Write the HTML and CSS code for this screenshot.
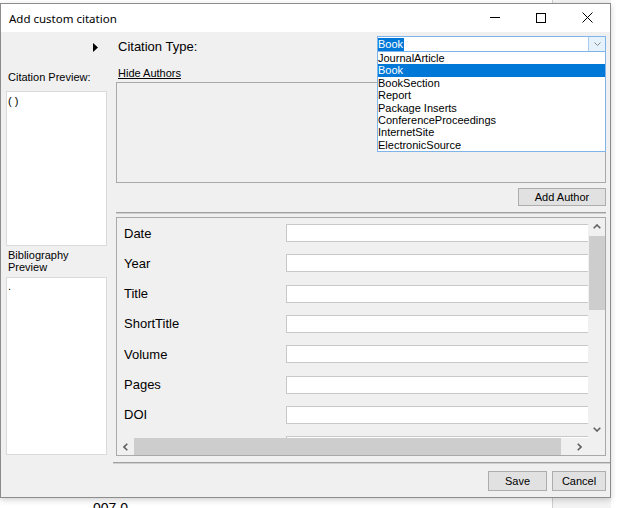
FILE: index.html
```html
<!DOCTYPE html>
<html>
<head>
<meta charset="utf-8">
<link rel="stylesheet" href="styles.css">
</head>
<body>
<div class="window">
  <div class="titlebar">
    <span class="title">Add custom citation</span>
    <div class="controls">
      <div class="ctl"><svg width="10" height="1" viewBox="0 0 10 1"><rect width="10" height="1" fill="#000"/></svg></div>
      <div class="ctl"><svg width="10" height="10" viewBox="0 0 10 10"><rect x="0.5" y="0.5" width="9" height="9" fill="none" stroke="#000" stroke-width="1"/></svg></div>
      <div class="ctl"><svg width="11" height="11" viewBox="0 0 11 11"><path d="M0.5 0.5L10.5 10.5M10.5 0.5L0.5 10.5" stroke="#000" stroke-width="1" fill="none"/></svg></div>
    </div>
  </div>
  <div class="client">
    <div class="leftcol">
      <div class="arrow-row"><svg width="5" height="9" viewBox="0 0 5 9"><path d="M0 0L5 4.5L0 9Z" fill="#000"/></svg></div>
      <div class="lbl cite-lbl">Citation Preview:</div>
      <div class="box cite-box">( )</div>
      <div class="lbl bib-lbl">Bibliography<br>Preview</div>
      <div class="box bib-box">.</div>
    </div>
    <div class="rightcol">
      <div class="type-row">
        <span class="type-lbl">Citation Type:</span>
        <div class="combo">
          <span class="combo-sel">Book</span>
          <div class="combo-btn"><svg width="7" height="4" viewBox="0 0 7 4"><path d="M0.5 0.5L3.5 3.5L6.5 0.5" stroke="#8a8a8a" stroke-width="1" fill="none"/></svg></div>
          <ul class="droplist">
            <li>JournalArticle</li>
            <li class="sel">Book</li>
            <li>BookSection</li>
            <li>Report</li>
            <li>Package Inserts</li>
            <li>ConferenceProceedings</li>
            <li>InternetSite</li>
            <li>ElectronicSource</li>
          </ul>
        </div>
      </div>
      <div class="hide-row"><span class="hide">Hide Authors</span></div>
      <div class="authors"></div>
      <div class="add-row"><div class="btn add-btn">Add Author</div></div>
      <div class="sep"></div>
      <div class="fields">
        <div class="fields-view">
          <div class="rows">
            <span class="flbl">Date</span><span class="finput"></span>
            <span class="flbl">Year</span><span class="finput"></span>
            <span class="flbl">Title</span><span class="finput"></span>
            <span class="flbl">ShortTitle</span><span class="finput"></span>
            <span class="flbl">Volume</span><span class="finput"></span>
            <span class="flbl">Pages</span><span class="finput"></span>
            <span class="flbl">DOI</span><span class="finput"></span>
            <span class="flbl"></span><span class="finput"></span>
          </div>
        </div>
        <div class="vscroll">
          <div class="sarrow"><svg width="8" height="5" viewBox="0 0 8 5"><path d="M0.7 4.3L4 1L7.3 4.3" stroke="#606060" stroke-width="1.6" fill="none"/></svg></div>
          <div class="vtrack"><div class="vthumb"></div></div>
          <div class="sarrow"><svg width="8" height="5" viewBox="0 0 8 5"><path d="M0.7 0.7L4 4L7.3 0.7" stroke="#606060" stroke-width="1.6" fill="none"/></svg></div>
        </div>
        <div class="hscroll">
          <div class="sarrow h"><svg width="5" height="8" viewBox="0 0 5 8"><path d="M4.3 0.7L1 4L4.3 7.3" stroke="#606060" stroke-width="1.6" fill="none"/></svg></div>
          <div class="htrack"><div class="hthumb"></div></div>
          <div class="sarrow h"><svg width="5" height="8" viewBox="0 0 5 8"><path d="M0.7 0.7L4 4L0.7 7.3" stroke="#606060" stroke-width="1.6" fill="none"/></svg></div>
        </div>
        <div class="corner"></div>
      </div>
      <div class="sep sep2"></div>
      <div class="btn-row">
        <div class="btn save-btn">Save</div>
        <div class="btn cancel-btn">Cancel</div>
      </div>
    </div>
  </div>
</div>
<div class="below">007.0</div>
</body>
</html>
```
FILE: styles.css
```css
* { box-sizing: border-box; }
html, body { margin: 0; padding: 0; }
body {
  width: 621px;
  height: 508px;
  overflow: hidden;
  padding-top: 3px;
  background: linear-gradient(to right, #ffffff 0, #ffffff 552px, #cfcfcf 552px, #cfcfcf 553px, #f3f3f3 553px, #f3f3f3 611px, #ffffff 611px);
  font-family: "Liberation Sans", Arial, sans-serif;
  color: #000;
}
.window {
  width: 611px;
  height: 495px;
  border: 1px solid #8c8c8c;
  background: #f0f0f0;
  box-shadow: 0 2px 6px rgba(0,0,0,0.18);
  display: flex;
  flex-direction: column;
}
.titlebar {
  height: 28px;
  background: #fff;
  display: flex;
  align-items: center;
  flex: none;
}
.title {
  font-family: "Noto Sans", "Liberation Sans", sans-serif;
  font-size: 11.5px;
  padding-left: 8px;
  flex: 1;
}
.controls { display: flex; height: 100%; }
.ctl {
  width: 46px;
  height: 100%;
  display: flex;
  align-items: center;
  justify-content: center;
  padding-bottom: 1px;
}
.client {
  flex: 1;
  display: flex;
  min-height: 0;
}
.leftcol {
  width: 113px;
  flex: none;
  padding-left: 5px;
  display: flex;
  flex-direction: column;
}
.arrow-row {
  height: 30px;
  display: flex;
  align-items: center;
  padding-left: 87px;
  padding-top: 1px;
}
.lbl {
  font-size: 11px;
  line-height: 13px;
  color: #000;
  padding-left: 2px;
}
.cite-lbl { margin-top: 9px; }
.box {
  width: 101px;
  background: #fff;
  border: 1px solid #dadada;
  font-size: 11px;
  line-height: 13px;
  padding: 3px 0 0 1px;
}
.cite-box { margin-top: 7px; height: 155px; }
.bib-lbl { margin-top: 3px; line-height: 12px; }
.bib-box { margin-top: 4px; height: 178px; padding-top: 2px; }

.rightcol {
  flex: 1;
  padding: 0 4px 0 2px;
  display: flex;
  flex-direction: column;
}
.type-row {
  display: flex;
  align-items: flex-start;
  padding-top: 4px;
  height: 20px;
}
.type-lbl {
  font-size: 13px;
  line-height: 15px;
  margin-top: 3px;
  margin-left: 2px;
}
.combo {
  position: relative;
  margin-left: auto;
  width: 229px;
  height: 16px;
  border: 1px solid #7eb4ea;
  background: #fff;
  display: flex;
  align-items: center;
}
.combo-sel {
  background: #0078d7;
  color: #fff;
  font-size: 11px;
  line-height: 13px;
  height: 13px;
  padding: 0 1px 0 0;
}
.combo-btn {
  margin-left: auto;
  width: 17px;
  height: 100%;
  background: #e5f1fb;
  border-left: 1px solid #a8cdf0;
  display: flex;
  align-items: center;
  justify-content: center;
}
.droplist {
  position: absolute;
  left: -1px;
  top: 14px;
  width: 229px;
  height: 101px;
  margin: 0;
  padding: 0;
  list-style: none;
  background: #fff;
  border: 1px solid #7eb4ea;
  z-index: 5;
}
.droplist li {
  height: 12.4px;
  font-size: 11px;
  line-height: 12.4px;
  padding-left: 0;
  white-space: nowrap;
}
.droplist li.sel { background: #0078d7; color: #fff; }

.hide-row { margin-top: 11px; height: 13px; }
.hide {
  font-size: 11px;
  line-height: 13px;
  text-decoration: underline;
  margin-left: 2px;
}
.authors {
  margin-top: 6px;
  height: 101px;
  border: 1px solid #a9a9a9;
}
.add-row {
  margin-top: 5px;
  display: flex;
  justify-content: flex-end;
}
.btn {
  background: #e1e1e1;
  border: 1px solid #adadad;
  font-size: 11px;
  display: flex;
  align-items: center;
  justify-content: center;
}
.add-btn { width: 88px; height: 18px; }
.sep {
  margin-top: 6px;
  height: 2px;
  border-top: 1px solid #a0a0a0;
  border-bottom: 1px solid #d0d0d0;
}
.fields {
  margin-top: 3px;
  height: 239px;
  border: 1px solid #a9a9a9;
  display: grid;
  grid-template-columns: 471px 17px;
  grid-template-rows: 220px 17px;
}
.fields-view {
  overflow: hidden;
  position: relative;
}
.rows {
  display: grid;
  grid-template-columns: 169px 330px;
  grid-auto-rows: 18px;
  row-gap: 12.33px;
  padding-top: 6px;
  align-items: center;
}
.flbl {
  font-size: 13px;
  line-height: 15px;
  padding-left: 7px;
}
.finput {
  height: 18px;
  background: #fff;
  border: 1px solid #c8c8c8;
}
.vscroll {
  background: #f0f0f0;
  display: flex;
  flex-direction: column;
}
.sarrow {
  height: 17px;
  display: flex;
  align-items: center;
  justify-content: center;
  flex: none;
}
.sarrow.h { width: 17px; height: 17px; }
.vtrack { flex: 1; padding-top: 1px; }
.vthumb { height: 74px; background: #cdcdcd; margin-left: 1px; }
.hscroll {
  background: #f0f0f0;
  display: flex;
}
.htrack { flex: 1; padding-left: 0; }
.hthumb { width: 427px; height: 100%; background: #cdcdcd; }
.corner { background: #f0f0f0; }
.sep2 { margin-top: 6px; margin-left: -3px; margin-right: -4px; }
.btn-row {
  margin-top: 7px;
  display: flex;
  justify-content: flex-end;
  gap: 5px;
}
.save-btn { width: 59px; height: 20px; }
.cancel-btn { width: 54px; height: 20px; }
.below {
  margin-top: 2px;
  padding-left: 93px;
  font-family: "Liberation Sans", Arial, sans-serif;
  font-size: 14px;
  line-height: 16px;
}
```
